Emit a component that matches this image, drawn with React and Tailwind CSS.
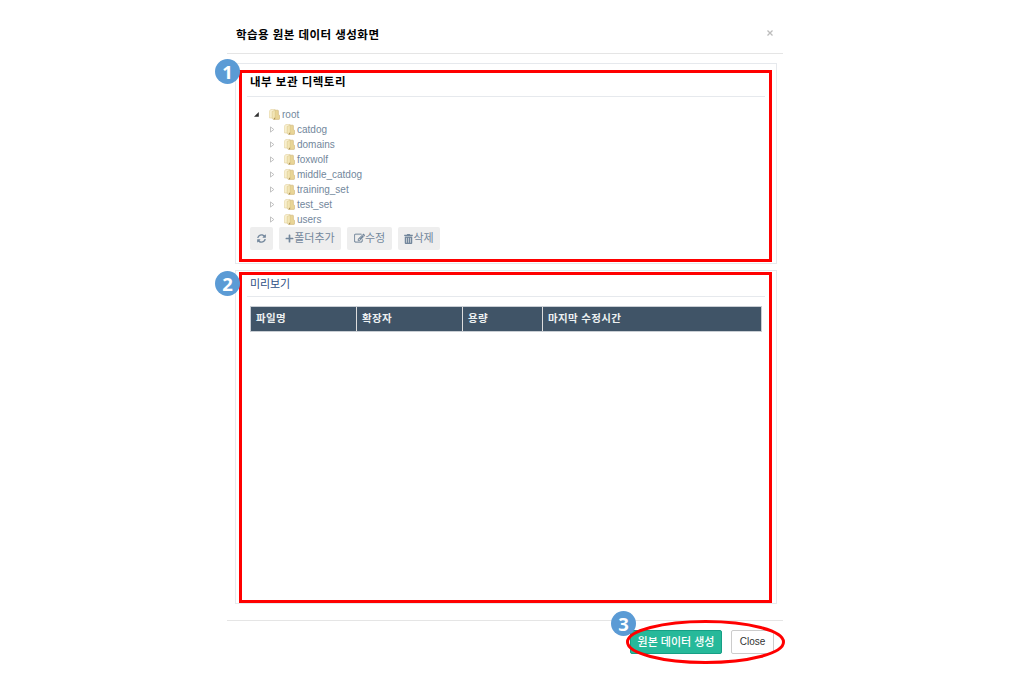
import React from "react";
import { FaSyncAlt, FaPlus, FaTrashAlt } from "react-icons/fa";

const folders = ["catdog", "domains", "foxwolf", "middle_catdog", "training_set", "test_set", "users"];

function FolderIcon() {
  return (
    <svg className="h-[11px] w-[11px] shrink-0" viewBox="0 0 11 11">
      <path d="M5.2 1.2 H8.8 Q9.4 1.2 9.4 2 V5.6 L10.6 6.4 V9.6 Q10.6 10.4 10 10.4 H5.2 Z" fill="#e9d596" stroke="#ccb478" strokeWidth="0.6" />
      <path d="M1.8 0.4 H5.4 Q6 0.4 6 1 V7.6 L3.4 9 H0.9 Q0.3 9 0.3 8.4 V2.2 Z" fill="#f8efcf" stroke="#dcc88f" strokeWidth="0.5" />
      <path d="M3.2 2.6 L6.2 0.9 V8.4 L4.4 10.5 L3.2 9.4 Z" fill="#f3e5b5" stroke="#d0ba7c" strokeWidth="0.4" />
      <path d="M4.2 10.5 L6.1 8.3 V10.3 Z" fill="#a98f50" />
    </svg>
  );
}

function EditIcon() {
  return (
    <svg className="h-[11px] w-[11px] shrink-0" viewBox="0 0 1792 1792" fill="currentColor" stroke="currentColor" strokeWidth="40">
      <path d="M888 1184l116-116-152-152-116 116v56h96v96h56zm440-720q-16-16-33 1l-350 350q-17 17-1 33t33-1l350-350q17-17 1-33zm80 594v190q0 119-84.5 203.5t-203.5 84.5h-832q-119 0-203.5-84.5t-84.5-203.5v-832q0-119 84.5-203.5t203.5-84.5h832q63 0 117 25 15 7 18 23 3 17-9 29l-49 49q-14 14-32 8-23-6-45-6h-832q-66 0-113 47t-47 113v832q0 66 47 113t113 47h832q66 0 113-47t47-113v-126q0-13 9-22l64-64q15-15 35-7t20 29zm-96-738l288 288-672 672h-288v-288zm444 132l-92 92-288-288 92-92q28-28 68-28t68 28l152 152q28 28 28 68t-28 68z" />
    </svg>
  );
}

function OpenArrow() {
  return (
    <svg className="h-[5px] w-[5px]" viewBox="0 0 5 5">
      <path d="M4.8 0 V4.8 H0 Z" fill="#303030" />
    </svg>
  );
}

function ClosedArrow() {
  return (
    <svg className="ml-px h-[7px] w-[5px]" viewBox="0 0 5 7">
      <path d="M0.5 0.9 L3.8 3.5 L0.5 6.1 Z" fill="#fff" stroke="#b4b4b4" strokeWidth="0.8" />
    </svg>
  );
}

function Badge({ n, className }) {
  return (
    <div
      className={
        "absolute flex h-[25px] w-[25px] items-center justify-center rounded-full bg-[#5b9bd5] font-['Open_Sans',sans-serif] text-[18.5px] leading-[25px] font-bold text-white " +
        className
      }
    >
      {n}
    </div>
  );
}

function ToolButton({ className, children }) {
  return (
    <button className={"flex h-[23px] items-center justify-center rounded-[2px] bg-[#eeeeee] text-[11px] text-[#73879c] " + className}>
      {children}
    </button>
  );
}

export default function App() {
  return (
    <div className="relative h-[694px] w-[1021px] overflow-hidden bg-white font-['Liberation_Sans','Noto_Sans_CJK_KR',sans-serif] text-[10px] leading-[15px] text-[#73879c]">
      <div className="ml-[227px] flex w-[556px] flex-col">
        <header className="flex h-[54px] items-start justify-between border-b border-[#e5e5e5] pr-[10px] pl-[9px]">
          <h1 className="mt-[27px] text-[11.5px] leading-[17px] font-bold tracking-[0.46px] text-black">학습용 원본 데이터 생성화면</h1>
          <svg className="mt-[30px] h-[6px] w-[6px]" viewBox="0 0 6 6">
            <path d="M0.5 0.5 L5.5 5.5 M5.5 0.5 L0.5 5.5" stroke="#bcbcbc" strokeWidth="1.3" />
          </svg>
        </header>

        <section className="mt-[9px] ml-2 h-[201px] w-[542px] border border-[#e6e9ed] px-[11px]">
          <h2 className="h-[33px] w-[518px] border-b border-[#e6e9ed] pt-[10px] pl-[3px] text-[11.5px] leading-[16px] font-bold tracking-[0.5px] text-black">
            내부 보관 디렉토리
          </h2>
          <div className="pt-[10px] pl-[7px]">
            <div className="flex h-[15px] items-center">
              <div className="flex w-[15px] items-center"><OpenArrow /></div>
              <FolderIcon />
              <span className="ml-[2px]">root</span>
            </div>
            {folders.map((name) => (
              <div key={name} className="flex h-[15px] items-center pl-[15px]">
                <div className="flex w-[15px] items-center"><ClosedArrow /></div>
                <FolderIcon />
                <span className="ml-[2px]">{name}</span>
              </div>
            ))}
          </div>
          <div className="flex gap-[6px] pl-[3px]">
            <ToolButton className="w-[23px]"><FaSyncAlt className="h-[9px] w-[9px]" /></ToolButton>
            <ToolButton className="w-[62px]"><FaPlus className="h-[9px] w-[9px]" />폴더추가</ToolButton>
            <ToolButton className="w-[45px]"><EditIcon />수정</ToolButton>
            <ToolButton className="w-[42px]"><FaTrashAlt className="h-[10px] w-[9px]" />삭제</ToolButton>
          </div>
        </section>

        <section className="mt-[6px] ml-2 h-[334px] w-[542px] border border-[#e6e9ed] px-[11px]">
          <h2 className="h-[26px] w-[518px] border-b border-[#e6e9ed] pt-[5px] pl-[3px] text-[11px] leading-[16px] tracking-[-0.1px] text-[#2f4f86]">미리보기</h2>
          <div className="mt-[9px] ml-[3px] grid h-[26px] w-[512px] grid-cols-[106px_106px_80px_218px] border border-[#c9ced4] bg-[#405467] text-[10.5px] leading-[23px] font-bold tracking-[0.35px] text-[#ecf0f1]">
            <div className="h-[24px] border-r border-[#dddddd] pl-[5px]">파일명</div>
            <div className="h-[24px] border-r border-[#dddddd] pl-[5px]">확장자</div>
            <div className="h-[24px] border-r border-[#dddddd] pl-[5px]">용량</div>
            <div className="h-[24px] pl-[5px]">마지막 수정시간</div>
          </div>
        </section>

        <footer className="mt-[16px] flex gap-[9px] border-t border-[#e5e5e5] pt-[9px] pl-[403px]">
          <button className="h-[24px] w-[92px] rounded-[2px] border border-[#169f85] bg-[#26b99a] pb-px text-[11px] leading-[20px] font-medium whitespace-nowrap text-white">
            원본 데이터 생성
          </button>
          <button className="h-[24px] w-[43px] rounded-[2px] border border-[#cccccc] bg-white text-[10px] leading-[22px] text-[#333333]">Close</button>
        </footer>
      </div>

      <div className="absolute top-[70px] left-[239px] h-[192px] w-[533px] border-[3px] border-[#ff0000]" />
      <div className="absolute top-[272px] left-[239px] h-[331px] w-[533px] border-[3px] border-[#ff0000]" />
      <Badge n="1" className="top-[59px] left-[215px]" />
      <Badge n="2" className="top-[271px] left-[215px]" />
      <Badge n="3" className="top-[611px] left-[611px]" />
      <svg className="absolute top-[620px] left-[626px] h-[44px] w-[159px]" viewBox="0 0 159 44">
        <ellipse cx="79.5" cy="22" rx="78" ry="20.5" fill="none" stroke="#ff0000" strokeWidth="3" />
      </svg>
    </div>
  );
}
